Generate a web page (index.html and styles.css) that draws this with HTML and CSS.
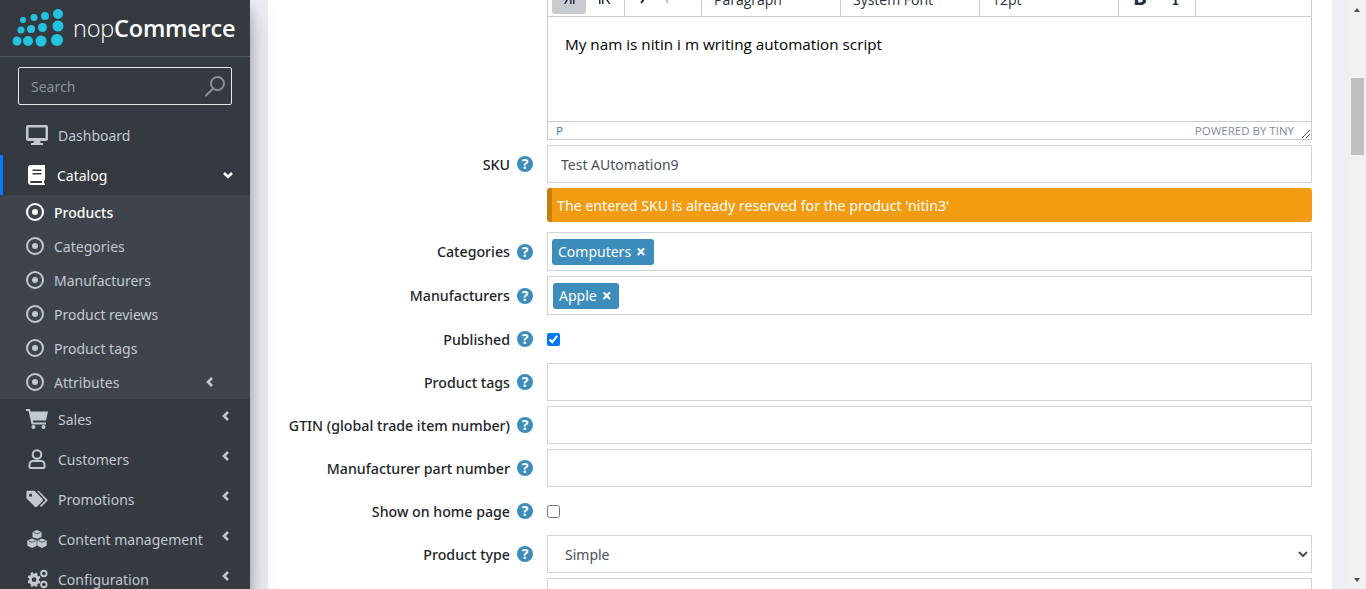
FILE: index.html
```html
<!DOCTYPE html>
<html lang="en">
<head>
    <meta charset="UTF-8">
    <meta name="viewport" content="width=device-width, initial-scale=1.0">
    <title>Edit product - nopCommerce</title>
    <link rel="stylesheet" href="styles.css">
</head>
<body>

    <aside class="sidebar">
        <div class="brand">
            <svg class="logo" width="56" height="40" viewBox="10 8 56 40">
                <g fill="#22c3e0">
                    <circle cx="23" cy="20" r="3"/><circle cx="34" cy="17.500" r="3.500"/><circle cx="45" cy="16" r="4"/><circle cx="58" cy="14" r="5"/>
                    <circle cx="21" cy="30" r="3.500"/><circle cx="31" cy="29" r="4"/><circle cx="42.500" cy="27.500" r="4.500"/><circle cx="58" cy="26" r="5.500"/>
                    <circle cx="17" cy="41" r="4.500"/><circle cx="28" cy="41" r="5"/><circle cx="41" cy="41" r="5.500"/><circle cx="57" cy="40" r="6"/>
                </g>
            </svg>
            <span class="brand-name">nop<b>Commerce</b></span>
        </div>
        <div class="search">
            <span>Search</span>
            <svg width="22" height="22" viewBox="0 0 22 22" fill="none" stroke="#8b8f94" stroke-width="2"><circle cx="13.500" cy="8.500" r="6.500"/><path d="M9 13.500 2 20.500" stroke-linecap="round"/></svg>
        </div>

        <nav class="menu">
            <a class="item">
                <svg class="ico" viewBox="0 0 22 20"><path d="M2 0h18a2 2 0 0 1 2 2v12a2 2 0 0 1-2 2h-6l.7 2H17v2H5v-2h2.300l.7-2H2a2 2 0 0 1-2-2V2a2 2 0 0 1 2-2zm.5 2.500v10.500h17V2.500z"/></svg>
                Dashboard
            </a>
            <a class="item open">
                <svg class="ico" viewBox="-2 0 22 20"><path d="M3 0H17v15l-1 .8V18l1 1v1H3a3 3 0 0 1-3-3V3a3 3 0 0 1 3-3zM4.500 4.500V6h9V4.500zm0 3.500v1.500h9V8zM3 16a1 1 0 0 0 0 2h11v-2z" fill-rule="evenodd"/></svg>
                Catalog
                <svg class="chev" viewBox="0 0 10 10"><path d="M1 3l4 4 4-4" /></svg>
            </a>
            <div class="submenu">
                <a class="sub current"><i></i>Products</a>
                <a class="sub"><i></i>Categories</a>
                <a class="sub"><i></i>Manufacturers</a>
                <a class="sub"><i></i>Product reviews</a>
                <a class="sub"><i></i>Product tags</a>
                <a class="sub"><i></i>Attributes<svg class="chev" viewBox="0 0 10 10"><path d="M7 1L3 5l4 4"/></svg></a>
            </div>
            <a class="item">
                <svg class="ico" viewBox="0 0 22 20"><path d="M0 0h4l.6 2.500H22l-2 9H7l.4 2H20v2H5.600L2.600 2H0z"/><circle cx="7.500" cy="18" r="2"/><circle cx="17.500" cy="18" r="2"/></svg>
                Sales
                <svg class="chev up" viewBox="0 0 10 10"><path d="M7 1L3 5l4 4"/></svg>
            </a>
            <a class="item">
                <svg class="ico line" viewBox="-2 0 22 20"><circle cx="9" cy="5.500" r="4.300"/><path d="M5 12h8a3.500 3.500 0 0 1 3.500 3.500V18a1 1 0 0 1-1 1h-13a1 1 0 0 1-1-1v-2.500A3.500 3.500 0 0 1 5 12z"/></svg>
                Customers
                <svg class="chev up" viewBox="0 0 10 10"><path d="M7 1L3 5l4 4"/></svg>
            </a>
            <a class="item">
                <svg class="ico" viewBox="0 0 24 20"><path d="M1.500 1h7.700l9 9a1.600 1.600 0 0 1 0 2.200l-6.300 6.300a1.600 1.600 0 0 1-2.200 0L.5 9.300V2a1 1 0 0 1 1-1zM5 4a1.800 1.800 0 1 0 0 3.600A1.800 1.800 0 0 0 5 4z" fill-rule="evenodd"/><path d="M12 1h1.800l9.200 9.200a1.500 1.500 0 0 1 0 2.100l-6.400 6.400-1.300-1.300 6-6.100z"/></svg>
                Promotions
                <svg class="chev up" viewBox="0 0 10 10"><path d="M7 1L3 5l4 4"/></svg>
            </a>
            <a class="item">
                <svg class="ico" viewBox="0 -1 20 20"><path d="M10 0l4.500 1.900v5L10 8.800 5.500 6.900v-5z"/><path d="M5 8.500l4.700 2v5.200L5 18 .3 15.700v-5.200z"/><path d="M15 8.500l4.700 2v5.200L15 18l-4.700-2.300v-5.200z"/><path d="M6.500 2.300L10 3.800l3.500-1.500M1.500 10.800L5 12.300l3.500-1.500M11.500 10.800L15 12.300l3.500-1.500" fill="none" stroke="#343a40" stroke-width="0.800"/></svg>
                Content management
                <svg class="chev up" viewBox="0 0 10 10"><path d="M7 1L3 5l4 4"/></svg>
            </a>
            <a class="item">
                <svg class="ico" viewBox="0 0 24 20"><path d="M8 4l1.800.4.900-1.500 2 1.200-.5 1.700 1.300 1.300 1.700-.3.500 2.300-1.600.8v1.900l1.600.8-.5 2.200-1.700-.2-1.300 1.300.5 1.700-2 1.100-1-1.400H7.900l-1 1.400-2-1.100.5-1.700-1.300-1.300-1.700.2L1.900 12l1.600-.8V9.300l-1.600-.8.500-2.300 1.700.3 1.300-1.300-.5-1.700 2-1.200.9 1.500zm.800 4.200a2.500 2.500 0 1 0 0 5 2.500 2.500 0 0 0 0-5z" fill-rule="evenodd"/><circle cx="19.500" cy="4" r="3" fill="none" stroke="#c2c7d0" stroke-width="2"/><circle cx="19.500" cy="16" r="3" fill="none" stroke="#c2c7d0" stroke-width="2"/></svg>
                Configuration
                <svg class="chev up" viewBox="0 0 10 10"><path d="M7 1L3 5l4 4"/></svg>
            </a>
        </nav>
    </aside>

    <main class="content">
        <form class="form">
            <div class="row">
                <div class="spacer"></div>
                <div class="editor">
                    <div class="toolbar">
                        <div class="tb-group tb-icons">
                            <span class="tb-btn active"><svg width="16" height="12" viewBox="0 0 16 12"><path d="M2 0h2l3 6-2.500 4H3l2-4z"/><path d="M9 0h1.500v10H9zM12 0h1.500v10H12z"/></svg></span>
                            <span class="tb-btn"><svg width="16" height="12" viewBox="0 0 16 12"><path d="M2 0h1.500v10H2zM5 0h1.500v10H5z"/><path d="M13 0h-1.500L9 6l3 4h1.500L11 6z"/></svg></span>
                        </div>
                        <div class="tb-group tb-undo">
                            <svg width="14" height="30" viewBox="0 0 14 30"><path d="M5 17c4 3 4 6 0 10" fill="none" stroke="#222f3e" stroke-width="2"/></svg>
                            <svg width="14" height="30" viewBox="0 0 14 30"><path d="M9 17c-3 3-3 6 0 10" fill="none" stroke="#aab0b8" stroke-width="1.500"/></svg>
                        </div>
                        <div class="tb-group tb-select">Paragraph</div>
                        <div class="tb-group tb-select">System Font</div>
                        <div class="tb-group tb-select">12pt</div>
                        <div class="tb-group tb-marks"><b>B</b><i>I</i></div>
                        <div class="tb-group tb-rest"></div>
                    </div>
                    <div class="editor-body">My nam is nitin i m writing automation script</div>
                    <div class="statusbar">
                        <span class="path">P</span>
                        <span class="powered">POWERED BY TINY</span>
                        <svg class="grip" width="10" height="10" viewBox="0 0 10 10" stroke="#555" fill="none"><path d="M1 9l8-8M5 9l4-4"/></svg>
                    </div>
                </div>
            </div>

            <div class="row">
                <label>SKU<span class="hint">?</span></label>
                <input class="field" type="text" value="Test AUtomation9">
            </div>
            <div class="row">
                <div class="spacer"></div>
                <div class="alert">The entered SKU is already reserved for the product 'nitin3'</div>
            </div>
            <div class="row row-cat">
                <label>Categories<span class="hint">?</span></label>
                <div class="field tags"><span class="tag">Computers<b>×</b></span></div>
            </div>
            <div class="row">
                <label>Manufacturers<span class="hint">?</span></label>
                <div class="field tags tags-alt"><span class="tag">Apple<b>×</b></span></div>
            </div>
            <div class="row row-check">
                <label>Published<span class="hint">?</span></label>
                <input class="check" type="checkbox" checked>
            </div>
            <div class="row">
                <label>Product tags<span class="hint">?</span></label>
                <input class="field" type="text">
            </div>
            <div class="row">
                <label>GTIN (global trade item number)<span class="hint">?</span></label>
                <input class="field" type="text">
            </div>
            <div class="row">
                <label>Manufacturer part number<span class="hint">?</span></label>
                <input class="field" type="text">
            </div>
            <div class="row row-check">
                <label>Show on home page<span class="hint">?</span></label>
                <input class="check" type="checkbox">
            </div>
            <div class="row">
                <label>Product type<span class="hint">?</span></label>
                <select class="field"><option>Simple</option></select>
            </div>
            <div class="row">
                <label><span class="hint">?</span></label>
                <input class="field" type="text">
            </div>
        </form>
    </main>

    <div class="scrollbar">
        <span class="arrow arrow-up"></span>
        <span class="thumb"></span>
        <span class="arrow arrow-down"></span>
    </div>

</body>
</html>
```

FILE: styles.css
```css
* {
    box-sizing: border-box;
}
html, body {
    height: 100%;
    margin: 0;
    overflow: hidden;
}
body {
    display: flex;
    font-family: "Noto Sans", Arial, sans-serif;
    font-size: 14px;
    color: #212529;
    background: #ecf0f5;
}

/* sidebar */
.sidebar {
    width: 250px;
    flex: none;
    height: 589px;
    overflow: hidden;
    background: #343a40;
    box-shadow: 0 14px 28px rgba(0, 0, 0, 0.25), 0 10px 10px rgba(0, 0, 0, 0.22);
    position: relative;
    z-index: 2;
}
.brand {
    height: 57px;
    display: flex;
    align-items: center;
    padding-left: 10px;
    border-bottom: 1px solid #4b545c;
}
.logo {
    flex: none;
    margin-right: 7px;
}
.brand-name {
    font-family: "Open Sans", sans-serif;
    font-size: 23.500px;
    font-weight: 300;
    letter-spacing: -0.2px;
    color: #fff;
}
.brand-name b {
    font-weight: 600;
}
.search {
    margin: 10px 18px;
    height: 38px;
    border: 1px solid #e8e8e8;
    border-radius: 2px;
    display: flex;
    align-items: center;
    justify-content: space-between;
    padding: 0 5px 0 12px;
    color: #8a8f95;
}
.item {
    height: 40px;
    display: flex;
    align-items: center;
    padding-left: 26px;
    color: #c2c7d0;
    position: relative;
}
.item.open {
    color: #fff;
    box-shadow: inset 3px 0 0 #007bff;
}
.ico {
    width: 22px;
    height: 20px;
    margin-right: 10px;
    fill: #c2c7d0;
    flex: none;
}
.item.open .ico {
    fill: #fff;
    margin-right: 9px;
}
.ico.line {
    fill: none;
    stroke: #c2c7d0;
    stroke-width: 2;
}
.chev {
    position: absolute;
    right: 17px;
    top: 15px;
    width: 10px;
    height: 10px;
    fill: none;
    stroke: currentColor;
    stroke-width: 2.600;
}
.chev.up {
    top: 12px;
    right: 19px;
}
.submenu {
    background: #3f444c;
}
.sub {
    height: 34px;
    display: flex;
    align-items: center;
    padding-left: 26px;
    color: #c2c7d0;
    position: relative;
}
.sub i {
    width: 18px;
    height: 18px;
    border-radius: 50%;
    border: 2px solid currentColor;
    margin-right: 10px;
    position: relative;
}
.sub i::after {
    content: "";
    position: absolute;
    left: 4px;
    top: 4px;
    width: 6px;
    height: 6px;
    border-radius: 50%;
    background: currentColor;
}
.sub.current {
    color: #fff;
    font-weight: 500;
}
.sub .chev {
    right: 35px;
    top: 12px;
}

/* main */
.content {
    flex: 1;
    height: 589px;
    overflow: hidden;
    margin: 0 17px 0 18px;
    background: #fff;
}
.form {
    margin-top: -24px;
    padding-right: 20px;
    display: flex;
    flex-direction: column;
    gap: 5px;
}
.row {
    display: flex;
    align-items: center;
}
.row label, .spacer {
    width: 279px;
    flex: none;
}
.row label {
    display: flex;
    justify-content: flex-end;
    align-items: center;
    font-size: 14.200px;
    font-weight: 500;
    color: #212529;
}
.hint {
    width: 16px;
    height: 16px;
    flex: none;
    margin: 0 14px 0 7px;
    border-radius: 50%;
    background: #3c8dbc;
    color: #fff;
    font-size: 14px;
    font-weight: 700;
    line-height: 16px;
    text-align: center;
}
.field {
    flex: 1;
    min-width: 0;
    height: 38px;
    border: 1px solid #ced4da;
    background: #fff;
    padding: 0 13px;
    font: inherit;
    color: #495057;
}
.row-cat {
    margin-top: 5px;
}
.row-check {
    height: 38px;
}
.check {
    margin: 0;
    width: 13px;
    height: 13px;
}

/* editor */
.editor {
    flex: 1;
    min-width: 0;
    border: 1px solid #ccc;
    border-width: 0 1px 1px 1px;
}
.toolbar {
    height: 41px;
    display: flex;
    border-bottom: 1px solid #ccc;
    color: #222f3e;
}
.tb-group {
    border-right: 1px solid #ccc;
    display: flex;
    padding-top: 14px;
    flex: none;
}
.tb-icons {
    width: 77px;
    padding-left: 4px;
    padding-top: 11px;
}
.tb-btn {
    width: 34px;
    height: 27px;
    margin-right: 2px;
    border-radius: 3px;
    display: flex;
    justify-content: center;
    padding-top: 7px;
    fill: #222f3e;
}
.tb-btn.active {
    background: #c8cbcf;
}
.tb-undo {
    width: 77px;
    gap: 9px;
    padding: 0 0 0 11px;
}
.tb-select {
    width: 139px;
    padding-left: 12px;
    font-family: "Open Sans", sans-serif;
}
.tb-marks {
    width: 77px;
    padding-left: 14px;
    gap: 25px;
    font-size: 21px;
    padding-top: 7px;
}
.tb-marks i {
    font-style: normal;
}
.tb-rest {
    flex: 1;
    border-right: 0;
}
.editor-body {
    height: 104px;
    padding: 17px;
    font-family: "Open Sans", sans-serif;
    font-size: 15.250px;
    color: #000;
}
.statusbar {
    height: 18px;
    border-top: 1px solid #ccc;
    display: flex;
    align-items: center;
    padding-left: 8px;
    font-family: "Open Sans", sans-serif;
    font-size: 11.500px;
    color: #7f8ba0;
    position: relative;
}
.powered {
    margin-left: auto;
    margin-right: 17px;
}
.path {
    color: #2b7cb8;
}
.grip {
    position: absolute;
    right: 0;
    bottom: 0;
}

/* alert + tags */
.alert {
    flex: 1;
    height: 34px;
    background: #f39c12;
    border-left: 5px solid #c87f0a;
    border-radius: 3px;
    color: #fff;
    font-size: 14.200px;
    display: flex;
    align-items: center;
    padding-left: 5px;
}
.tags {
    height: 39px;
    display: flex;
    align-items: center;
    padding: 0 4px;
}
.tags-alt {
    padding-left: 5px;
}
.tag {
    height: 26px;
    display: flex;
    align-items: center;
    padding: 0 8px 0 6px;
    border-radius: 3px;
    background: #3c8dbc;
    color: #fff;
}
.tag b {
    margin-left: 5px;
    font-size: 17px;
    line-height: 1;
}

/* page scrollbar */
.scrollbar {
    width: 17px;
    flex: none;
    background: #f1f1f1;
    position: relative;
}
.thumb {
    position: absolute;
    left: 2px;
    top: 78px;
    width: 13px;
    height: 77px;
    background: #c1c1c1;
}
.arrow {
    position: absolute;
    left: 5px;
    width: 0;
    height: 0;
    border: 3.500px solid transparent;
}
.arrow-up {
    top: 5px;
    border-bottom: 4px solid #505050;
}
.arrow-down {
    bottom: 4px;
    border-top: 4px solid #505050;
}
```
